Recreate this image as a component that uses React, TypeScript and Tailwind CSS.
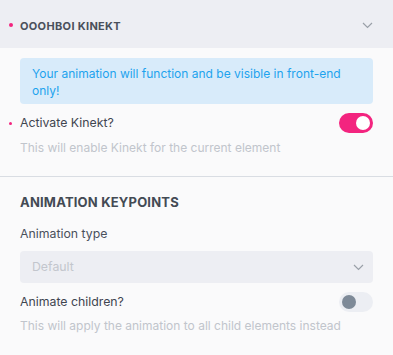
import React, { useState } from 'react';

const Toggle: React.FC<{ on: boolean; onChange: () => void }> = ({ on, onChange }) => (
  <button
    onClick={onChange}
    className={`w-[34px] h-[20px] rounded-full flex items-center px-[3px] ${on ? 'bg-[#f3247f] justify-end' : 'bg-[#eceef3] justify-start'}`}
  >
    <span className={`w-[14px] h-[14px] rounded-full ${on ? 'bg-white' : 'bg-[#7e8a98]'}`} />
  </button>
);

const Chevron: React.FC<{ className?: string }> = ({ className }) => (
  <svg className={className} width="11" height="7" viewBox="0 0 11 7" fill="none" stroke="currentColor" strokeWidth={1.2}>
    <path d="M1 1l4.5 4.5L10 1" />
  </svg>
);

export default function App() {
  const [active, setActive] = useState(true);
  const [children, setChildren] = useState(false);

  return (
    <div className="w-[393px] h-[355px] bg-[#fafafb] text-[#434a54] overflow-hidden" style={{ fontFamily: 'Inter, "Noto Sans", sans-serif' }}>
      {/* Panel header */}
      <div className="h-[48px] bg-[#edeef3] flex items-center pl-[9px] pr-[20px]">
        <span className="w-[4px] h-[4px] rounded-full bg-[#f3247f] mr-[7px] mt-[1px]" />
        <span className="text-[11px] leading-[16px] font-bold tracking-[0.03em] uppercase text-[#4a505b] pt-[3px]">Ooohboi Kinekt</span>
        <Chevron className="ml-auto text-[#9aa0a8] mt-[2px]" />
      </div>

      <div className="pt-[10px] pb-[19px] border-b border-[#d9dde3]">
        <div className="mx-[20px] rounded-[4px] bg-[#d8ebfa] px-[12px] pt-[7px] pb-[5px] text-[12px] leading-[17px] text-[#1ea3ee]">
          Your animation will function and be visible in front-end only!
        </div>

        <div className="mt-[9px] flex items-center pl-[9px] pr-[20px]">
          <span className="w-[3px] h-[3px] rounded-full bg-[#f3247f] mr-[8px]" />
          <span className="text-[12.3px] leading-[18px] text-[#3f4550]">Activate Kinekt?</span>
          <div className="ml-auto">
            <Toggle on={active} onChange={() => setActive(!active)} />
          </div>
        </div>
        <p className="mt-[6px] px-[20px] text-[12px] leading-[18px] text-[#c1c5cc]">This will enable Kinekt for the current element</p>
      </div>

      <div className="px-[20px] pt-[15px]">
        <h2 className="text-[13px] leading-[20px] font-bold tracking-[0.015em] uppercase text-[#434a54]">Animation Keypoints</h2>
        <div className="mt-[13px] text-[12.3px] leading-[18px] text-[#4a505b]">Animation type</div>
        <div className="mt-[8px] h-[32px] rounded-[4px] bg-[#edeef3] flex items-center pl-[12px] pr-[9px]">
          <span className="text-[12.3px] text-[#c3c6cd]">Default</span>
          <Chevron className="ml-auto text-[#9aa0a8]" />
        </div>
        <div className="mt-[9px] flex items-center">
          <span className="text-[12.3px] leading-[18px] text-[#3f4550]">Animate children?</span>
          <div className="ml-auto">
            <Toggle on={children} onChange={() => setChildren(!children)} />
          </div>
        </div>
        <p className="mt-[5px] text-[12px] leading-[18px] text-[#c1c5cc]">This will apply the animation to all child elements instead</p>
      </div>
      <div className="mt-[20px] border-b border-[#d9dde3]" />
    </div>
  );
}
